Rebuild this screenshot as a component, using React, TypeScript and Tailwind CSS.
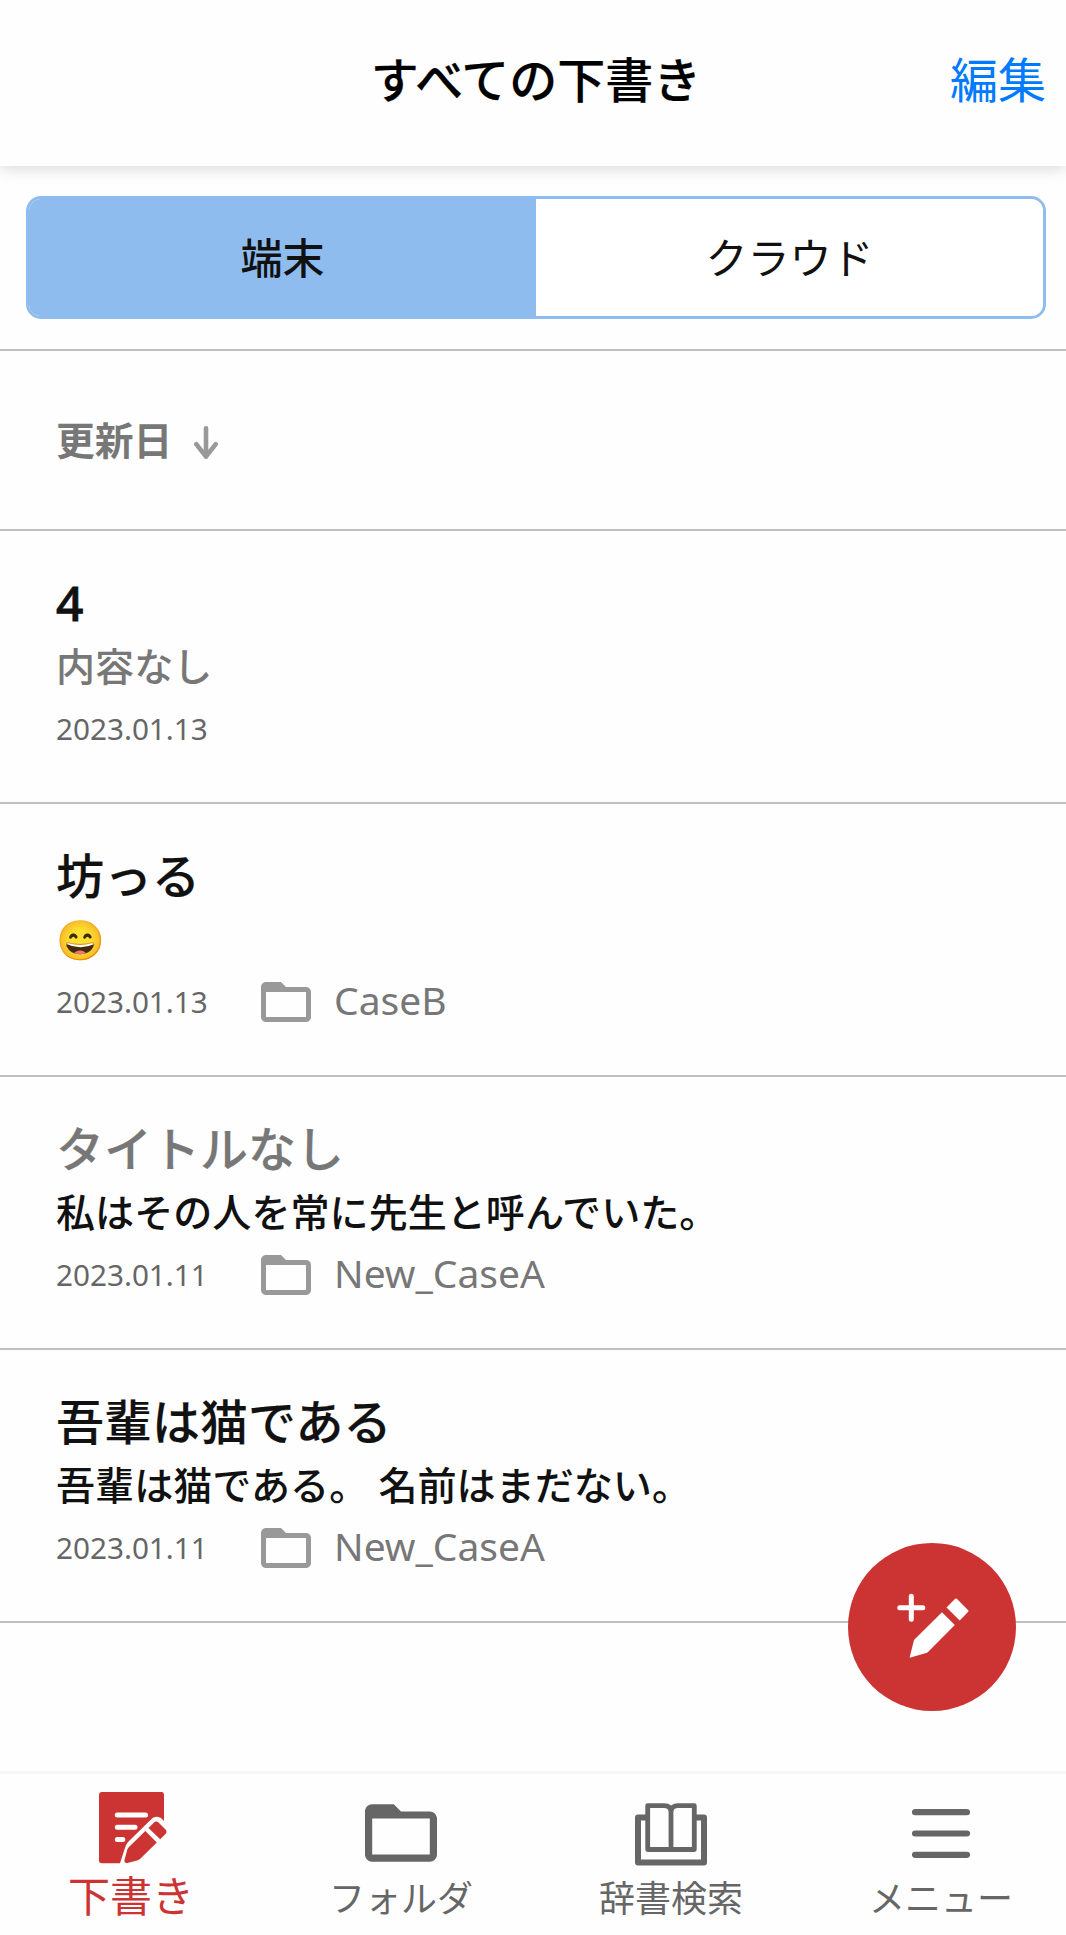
import React from "react";

type Draft = {
  title: string;
  untitled?: boolean;
  body: string;
  empty?: boolean;
  date: string;
  folder?: string;
};

const drafts: Draft[] = [
  { title: "4", body: "内容なし", empty: true, date: "2023.01.13" },
  { title: "坊っる", body: "😄", date: "2023.01.13", folder: "CaseB" },
  {
    title: "タイトルなし",
    untitled: true,
    body: "私はその人を常に先生と呼んでいた。",
    date: "2023.01.11",
    folder: "New_CaseA",
  },
  {
    title: "吾輩は猫である",
    body: "吾輩は猫である。 名前はまだない。",
    date: "2023.01.11",
    folder: "New_CaseA",
  },
];

function FolderIcon({ className }: { className: string }) {
  return (
    <svg viewBox="0 0 20 16" className={className} fill="currentColor">
      <path
        fillRule="evenodd"
        d="M2 0H8L10 2H18C19.1 2 20 2.9 20 4V14C20 15.1 19.1 16 18 16H2C.9 16 0 15.1 0 14V2C0 .9.9 0 2 0ZM2 4V14H18V4Z"
      />
    </svg>
  );
}

function ArrowDownIcon() {
  return (
    <svg
      viewBox="0 0 24 33"
      className="ml-[22px] mt-1 h-[33px] w-6 text-[#999999]"
      fill="none"
      stroke="currentColor"
      strokeWidth="4.6"
      strokeLinecap="round"
      strokeLinejoin="round"
    >
      <path d="M12 2.3V30M2.3 18.2L12 30.6L21.7 18.2" />
    </svg>
  );
}

function DraftIcon() {
  return (
    <svg viewBox="0 0 68 72" className="ml-1 h-[72px] w-[68px]">
      <path
        d="M3 0H62.5Q65 0 65 3V29Q60 22.500 53.500 26L29 50Q26.500 53 25.600 57L21 71.300H3Q0 71.300 0 68.500V3Q0 0 3 0Z"
        fill="#cc3333"
      />
      <path d="M18.300 23H46.500M18.300 35.300H36M18.300 47.500H23.800" stroke="#fff" strokeWidth="5" strokeLinecap="round" />
      <path d="M46.300 39L57.800 50.500L41.500 66.500Q40 68 38 68.500L28.500 71Q25 71.500 25.500 68L28.300 57.500Q28.800 56 30 55Z" fill="#cc3333" />
      <path d="M49.500 36L55 30.500Q57.300 28.500 59.500 30.500L66.500 37.500Q68.500 39.700 66.500 42L61.200 47.300Z" fill="#cc3333" />
    </svg>
  );
}

function BookIcon() {
  return (
    <svg viewBox="0 0 72 63" className="h-[63px] w-[72px]" fill="none" stroke="#666666" strokeLinejoin="round">
      <path d="M12 14.500H3V59.500H69V14.500H60" strokeWidth="6" />
      <path d="M36 46.500H12.700V2.700H29Q36 2.700 36 9Q36 2.700 43 2.700H59.300V46.500H36V8" strokeWidth="4.800" />
    </svg>
  );
}

function MenuIcon() {
  return (
    <svg viewBox="0 0 58 49" className="h-[49px] w-[58px]">
      <path d="M3 3.200H55M3 24.500H55M3 45.800H55" stroke="#666666" strokeWidth="6.200" strokeLinecap="round" />
    </svg>
  );
}

function ComposeIcon() {
  return (
    <svg viewBox="0 0 72 66" className="mb-0.5 ml-px h-[66px] w-[72px]" fill="#fff">
      <path d="M14.300 3.200V26.200M2.800 14.700H25.800" stroke="#fff" strokeWidth="5" strokeLinecap="round" />
      <path d="M45 19.300L57.800 32.100L31 59Q30.300 59.700 29.300 60L12.600 64.700L16.800 47.800Q17 47 17.700 46.300Z" />
      <path d="M49.500 14.500L58.200 5.800Q59 5 59.800 5.800L71.200 17.200Q72 18 71.200 18.800L62.700 27.500Z" />
    </svg>
  );
}

function DraftRow({ draft }: { draft: Draft }) {
  // Latin-only titles have no medium face, so they get a heavier outline.
  const weight = /^[\x20-\x7e]+$/.test(draft.title)
    ? "[-webkit-text-stroke:0.8px_currentColor]"
    : "[-webkit-text-stroke:0.2px_currentColor]";
  return (
    <li className="h-[273px] border-b-2 border-[#bfbfbf] px-14 pt-[42px]">
      <h2 className={`text-[48px] leading-[60px] font-medium ${weight} ${draft.untitled ? "text-[#777777]" : "text-[#111111]"}`}>
        {draft.title}
      </h2>
      <p className={`mt-[9px] h-12 text-[39.1px] leading-[48px] font-medium ${draft.empty ? "text-[#777777]" : "text-[#111111]"}`}>
        {draft.body}
      </p>
      <div className="mt-[15px] flex h-12 items-center">
        <time className="w-[205px] text-[29.7px] leading-[48px] text-[#666666]">{draft.date}</time>
        {draft.folder && (
          <>
            <FolderIcon className="h-10 w-[50px] text-[#999999]" />
            <span className="mb-[5px] ml-[23px] text-[39px] leading-[43px] text-[#777777]">{draft.folder}</span>
          </>
        )}
      </div>
    </li>
  );
}

export default function App() {
  return (
    <div className="relative flex h-[1935px] w-[1066px] flex-col overflow-hidden bg-[#fefefe] font-['Noto_Sans','Noto_Sans_CJK_JP',sans-serif]">
      <header className="relative z-10 grid h-[166px] grid-cols-[1fr_auto_1fr] items-center bg-[#fefefe] pr-5 pb-1.5 pl-[26px] shadow-[0_2px_14px_rgba(0,0,0,0.16)]">
        <h1 className="col-start-2 text-[48px] leading-[60px] font-medium text-black [-webkit-text-stroke:0.2px_currentColor]">
          すべての下書き
        </h1>
        <button className="justify-self-end text-[48px] leading-[60px] text-[#007aff]">編集</button>
      </header>

      <div className="h-[185px] border-b-2 border-[#bfbfbf] pt-[30px] pr-5 pl-[26px]">
        <div className="grid h-[123px] grid-cols-2 overflow-hidden rounded-[15px] border-[3px] border-[#8fbcef] text-[42px] text-[#111111]">
          <button className="bg-[#8fbcef] font-medium">端末</button>
          <button className="bg-white">クラウド</button>
        </div>
      </div>

      <div className="flex h-[180px] items-center border-b-2 border-[#bfbfbf] px-14 pt-px">
        <span className="text-[38.8px] font-bold text-[#777777]">更新日</span>
        <ArrowDownIcon />
      </div>

      <ul>
        {drafts.map((draft, i) => (
          <DraftRow key={i} draft={draft} />
        ))}
      </ul>

      <nav className="mt-auto -mr-[10px] -ml-[4px] grid h-[164px] grid-cols-4 border-t-[3px] border-[#f6f6f6] text-[36px] leading-[48px] text-[#666666]">
        <button className="flex flex-col items-center pt-[18px] text-[42px] text-[#cc3333]">
          <DraftIcon />
          <span className="mt-[8px]">下書き</span>
        </button>
        <button className="flex flex-col items-center pt-[30px]">
          <FolderIcon className="h-[58px] w-[72px]" />
          <span className="mt-[13px]">フォルダ</span>
        </button>
        <button className="flex flex-col items-center pt-[29px]">
          <BookIcon />
          <span className="mt-[9px]">辞書検索</span>
        </button>
        <button className="flex flex-col items-center pt-[35px]">
          <MenuIcon />
          <span className="mt-[17px]">メニュー</span>
        </button>
      </nav>

      <button className="absolute top-[1543px] left-[848px] flex size-[168px] items-center justify-center rounded-full bg-[#cc3333]">
        <ComposeIcon />
      </button>
    </div>
  );
}
